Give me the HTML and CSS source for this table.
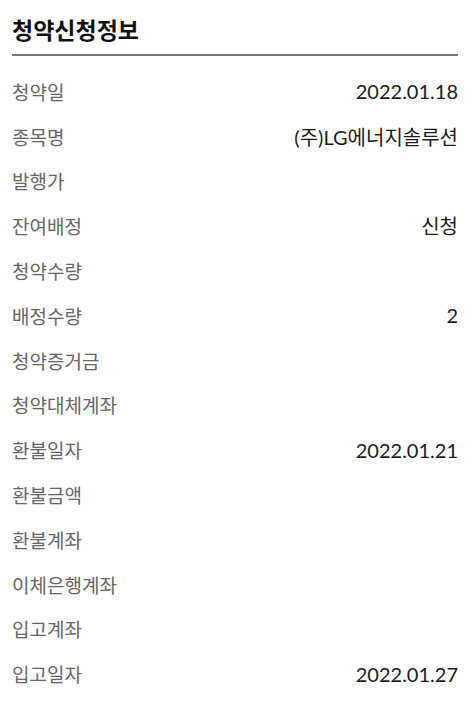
FILE: index.html
```html
<!DOCTYPE html>
<html lang="ko">

<head>
    <meta charset="UTF-8">
    <meta name="viewport" content="width=device-width, initial-scale=1.0">
    <title>청약신청정보</title>
    <link rel="stylesheet" href="styles.css">
</head>

<body>
    <div class="section">
        <h2 class="sectionTitle">청약신청정보</h2>
        <ul class="infoList">
            <li class="infoRow"><span class="label">청약일</span><span class="value">2022.01.18</span></li>
            <li class="infoRow"><span class="label">종목명</span><span class="value">(주)LG에너지솔루션</span></li>
            <li class="infoRow"><span class="label">발행가</span><span class="value"></span></li>
            <li class="infoRow"><span class="label">잔여배정</span><span class="value">신청</span></li>
            <li class="infoRow"><span class="label">청약수량</span><span class="value"></span></li>
            <li class="infoRow"><span class="label">배정수량</span><span class="value">2</span></li>
            <li class="infoRow"><span class="label">청약증거금</span><span class="value"></span></li>
            <li class="infoRow"><span class="label">청약대체계좌</span><span class="value"></span></li>
            <li class="infoRow"><span class="label">환불일자</span><span class="value">2022.01.21</span></li>
            <li class="infoRow"><span class="label">환불금액</span><span class="value"></span></li>
            <li class="infoRow"><span class="label">환불계좌</span><span class="value"></span></li>
            <li class="infoRow"><span class="label">이체은행계좌</span><span class="value"></span></li>
            <li class="infoRow"><span class="label">입고계좌</span><span class="value"></span></li>
            <li class="infoRow"><span class="label">입고일자</span><span class="value">2022.01.27</span></li>
        </ul>
    </div>
</body>

</html>
```

FILE: styles.css
```css
body {
    margin: 0;
    background-color: #fff;
    font-family: Lato, "Noto Sans CJK KR", sans-serif;
    color: #222;
}

.section {
    padding: 0 15px 0 12px;
}

.sectionTitle {
    margin: 0;
    height: 56px;
    line-height: 60px;
    font-size: 23px;
    font-weight: bold;
    color: #111;
    border-bottom: 2px solid #777;
    box-sizing: border-box;
}

.infoList {
    list-style: none;
    margin: 0;
    padding: 13px 0 0 0;
}

.infoRow {
    display: flex;
    justify-content: space-between;
    align-items: center;
    height: 44.8px;
    font-size: 19px;
}

.label {
    color: #666;
}

.value {
    font-size: 20px;
    color: #1c1c1c;
}
```
